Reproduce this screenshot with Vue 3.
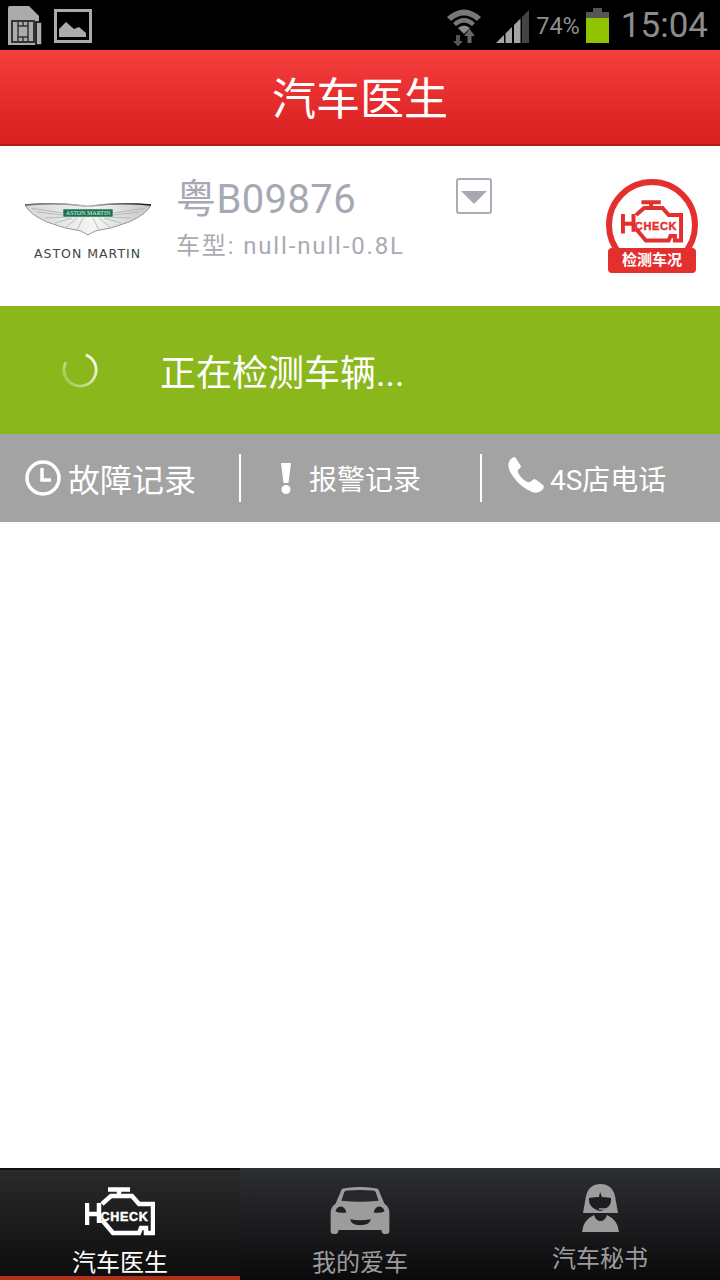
<template>
  <div class="app">
    <div class="status">
      <div class="status__left">
        <svg class="ic-sim" viewBox="0 0 36 40">
          <path d="M0 2Q0 0 2 0H21L31 10V39H0Z" fill="#a9aca8" />
          <rect x="28" y="16" width="6" height="23" fill="#a9aca8" stroke="#000" stroke-width="1.5" />
          <rect x="4" y="15" width="22" height="21" fill="none" stroke="#333" stroke-width="2" />
          <rect x="10" y="20" width="10" height="11" fill="none" stroke="#333" stroke-width="1.5" />
          <path d="M10 15v5M15 15v5M20 15v5M10 31v5M15 31v5M20 31v5" stroke="#333" stroke-width="1.5" />
        </svg>
        <svg class="ic-pic" viewBox="0 0 38 34">
          <rect x="1.5" y="1.5" width="35" height="31" fill="none" stroke="#a9aca8" stroke-width="3" />
          <path d="M5 28V20L12 13L20 20L25 18L32 24V28Z" fill="#a9aca8" />
        </svg>
      </div>
      <div class="status__right">
        <svg class="ic-wifi" viewBox="0 0 34 38">
          <path d="M0 9Q17 -6 34 9L30 13Q17 2 4 13Z" fill="#777" />
          <path d="M6 15Q17 5 28 15L25 18Q17 11 9 18Z" fill="#777" />
          <path d="M11 20Q17 15 23 20L17 26Z" fill="#8a8a8a" />
          <path d="M9 27H13V33H16L11 38.500L6 33H9Z" fill="#555" />
          <path d="M20.500 35V28H17L22.500 21L28 28H24.500V35Z" fill="#666" />
        </svg>
        <svg class="ic-signal" viewBox="0 0 33 33">
          <path d="M0 33L8 25V33Z M9.500 33V23.500L16 17V33Z M18 33V15L24.500 8.500V33Z" fill="#a5a5a5" />
          <path d="M26 33V7L33 0V33Z" fill="#444" />
        </svg>
        <span class="status__pct">74%</span>
        <div class="battery">
          <i class="battery__cap"></i>
          <i class="battery__empty"></i>
          <i class="battery__fill"></i>
        </div>
        <span class="status__time">15:04</span>
      </div>
    </div>

    <div class="title">汽车医生</div>

    <div class="car">
      <div class="car__logo">
        <svg class="wings" viewBox="0 0 126 34">
          <defs>
            <linearGradient id="wing" x1="0" y1="0" x2="1" y2="0">
              <stop offset="0" stop-color="#d4d6d5" />
              <stop offset="0.55" stop-color="#f4f5f5" />
              <stop offset="1" stop-color="#c4c6c6" />
            </linearGradient>
            <linearGradient id="edge" x1="0" y1="0" x2="1" y2="0">
              <stop offset="0" stop-color="#5a5e5e" />
              <stop offset="0.5" stop-color="#b9bcbc" />
              <stop offset="1" stop-color="#141414" />
            </linearGradient>
          </defs>
          <path d="M0 3Q30 0 60 4H66Q96 0 126 3Q122 12 104 20Q86 27 70 29L63 33L56 29Q40 27 22 20Q4 12 0 3Z" fill="url(#wing)" stroke="#7d8181" stroke-width="0.8" />
          <path d="M0 3Q30 0 60 4M66 4Q96 0 126 3" fill="none" stroke="url(#edge)" stroke-width="1.6" />
          <path d="M7 6.500L38 11M12 10L38 13M20 16L42 15M30 21L47 16M41 25L52 16M52 28L58 16M74 28L68 16M85 25L74 16M96 21L79 16M106 16L84 15M114 10L88 13M119 6.500L88 11" stroke="#a4a8a8" stroke-width="0.7" fill="none" />
          <rect x="38" y="7" width="50" height="8" fill="#16734f" stroke="#dfe2e1" stroke-width="0.6" />
          <text x="63" y="13" class="wings__label" text-anchor="middle">ASTON MARTIN</text>
        </svg>
        <span class="car__brand">ASTON MARTIN</span>
      </div>
      <div class="car__info">
        <div class="car__plate">粤B09876</div>
        <div class="car__model">车型: null-null-0.8L</div>
      </div>
      <div class="car__arrow"><i></i></div>
      <div class="check">
        <div class="check__ring">
          <svg class="check__engine" viewBox="0 0 70 50">
            <path d="M23 2.500H45M34 2.500V9M2 16V38M2 27H14M14 16V36M17 17L26 9H47L54 17H68V46H61V41H56L54 46H28L17 33" fill="none" stroke="#e42f2f" stroke-width="4.500" />
            <text x="39.500" y="34" class="check__word" text-anchor="middle">CHECK</text>
          </svg>
        </div>
        <div class="check__tag">检测车况</div>
      </div>
    </div>

    <div class="progress">
      <svg class="spinner" viewBox="0 0 38 38">
        <defs>
          <linearGradient id="spin" x1="1" y1="0" x2="0" y2="0.8">
            <stop offset="0" stop-color="#fff" />
            <stop offset="1" stop-color="#fff" stop-opacity="0.25" />
          </linearGradient>
        </defs>
        <path d="M25 3A17 17 0 1 1 4 11" fill="none" stroke="url(#spin)" stroke-width="3" />
      </svg>
      <span class="progress__text">正在检测车辆...</span>
    </div>

    <div class="actions">
      <div class="action action--record">
        <svg class="action__clock" viewBox="0 0 36 36">
          <circle cx="18" cy="18" r="16" fill="none" stroke="#fff" stroke-width="3.500" />
          <path d="M17 8V20H26" fill="none" stroke="#fff" stroke-width="3.500" />
        </svg>
        <span class="action__big">故障记录</span>
      </div>
      <div class="action action--alarm">
        <svg class="action__bang" viewBox="0 0 12 32">
          <path d="M1 1H11L8.500 21H3.500Z" fill="#fff" />
          <circle cx="6" cy="27.500" r="4.500" fill="#fff" />
        </svg>
        <span>报警记录</span>
      </div>
      <div class="action action--phone">
        <svg class="action__phone" viewBox="0 0 36 36">
          <path d="M7 0L13 9Q13 11 10 13Q9 15 13 20Q18 26 22 25L26 22Q28 22 36 29Q36 32 33 34Q29 37 24 35Q12 30 4 18Q-2 9 2 3Q4 0 7 0Z" fill="#fff" />
        </svg>
        <span>4S店电话</span>
      </div>
    </div>

    <div class="spacer"></div>

    <div class="tabs">
      <div class="tab tab--active">
        <svg class="tab__engine" viewBox="0 0 70 50">
          <path d="M23 2.500H45M34 2.500V9M2 16V38M2 27H14M14 16V36M17 17L26 9H47L54 17H68V46H61V41H56L54 46H28L17 33" fill="none" stroke="#fff" stroke-width="4.500" />
          <text x="39.500" y="34" class="tab__word" text-anchor="middle">CHECK</text>
        </svg>
        <span class="tab__label">汽车医生</span>
      </div>
      <div class="tab">
        <svg class="tab__car" viewBox="0 0 60 48">
          <path d="M11 3Q12 1 16 1Q30 -1 44 1Q48 1 49 3L55 17Q60 20 60 26V45Q60 48 57 48H55Q52 48 52 44H8Q8 48 5 48H3Q0 48 0 45V26Q0 20 5 17Z" fill="#9c9c9c" />
          <path d="M11 14L14 5Q15 3.500 18 3.500Q30 2.500 42 3.500Q45 3.500 46 5L49 14Q30 16 11 14Z" fill="#26272a" />
          <path d="M5 25Q6 20 11 20Q15 21 16 26Q10 27 5 25ZM55 25Q54 20 49 20Q45 21 44 26Q50 27 55 25ZM20 33Q30 35 41 33Q40 39 30 39Q21 39 20 33Z" fill="#1f2023" />
        </svg>
        <span class="tab__label">我的爱车</span>
      </div>
      <div class="tab tab--third">
        <svg class="tab__agent" viewBox="0 0 37 48">
          <path d="M18.500 0Q30 0 33 12L36 29H1L4 12Q7 0 18.500 0Z" fill="#9c9c9c" />
          <path d="M7 14Q18 12 29 14Q30 24 18 27Q6 24 7 14Z" fill="#1c1d20" />
          <path d="M18 8L20 13H17Z" fill="#1c1d20" />
          <path d="M17 25H24Q28 24 29 21" fill="none" stroke="#9c9c9c" stroke-width="1.500" />
          <path d="M0 48Q1 36 12 31Q14 37 18.500 37Q23 37 25 31Q36 36 37 48Z" fill="#9c9c9c" />
        </svg>
        <span class="tab__label">汽车秘书</span>
      </div>
    </div>
  </div>
</template>

<script setup>
</script>

<style scoped>
.app {
  width: 720px;
  height: 1280px;
  display: flex;
  flex-direction: column;
  background: #fff;
  overflow: hidden;
  font-family: Roboto, "Noto Sans CJK SC", sans-serif;
}

.status {
  height: 50px;
  flex-shrink: 0;
  background: #000;
  display: flex;
  align-items: center;
  justify-content: space-between;
  padding: 0 12px 0 8px;
}
.status__left { display: flex; align-items: flex-start; gap: 10px; }
.ic-sim { width: 36px; height: 40px; margin-top: 1px; }
.ic-pic { width: 38px; height: 34px; margin-top: 4px; }
.status__right { display: flex; align-items: center; }
.ic-wifi { width: 34px; height: 38px; margin: 4px 15px 0 0; }
.ic-signal { width: 33px; height: 33px; margin: 3px 7px 0 0; }
.status__pct { font-size: 23.500px; color: #8f8f8f; margin: 2px 6px 0 0; }
.battery { width: 23px; height: 35px; display: flex; flex-direction: column; align-items: center; margin: 1px 12px 0 0; }
.battery__cap { width: 9px; height: 4px; background: #555; }
.battery__empty { width: 23px; height: 6px; background: #555; }
.battery__fill { width: 23px; height: 25px; background: #91c400; }
.status__time { font-size: 35px; color: #8c8c8c; }

.title {
  height: 96px;
  flex-shrink: 0;
  box-sizing: border-box;
  background: linear-gradient(#f43d3d, #d91f1f);
  border-bottom: 2px solid #b81a1a;
  color: #fff;
  font-size: 44px;
  line-height: 100px;
  text-align: center;
}

.car {
  height: 160px;
  flex-shrink: 0;
  display: flex;
  align-items: flex-start;
}
.car__logo { width: 177px; display: flex; flex-direction: column; align-items: flex-start; padding-top: 56px; box-sizing: border-box; height: 160px; }
.wings { width: 126px; height: 34px; margin-left: 25px; }
.wings__label { font-size: 6px; fill: #e8f0ea; font-family: "Liberation Serif", serif; }
.car__brand { font-family: "DejaVu Sans", sans-serif; font-size: 12.500px; letter-spacing: 1px; color: #444; margin: 10px 0 0 34px; white-space: nowrap; }
.car__info { width: 279px; padding-top: 29px; }
.car__plate { font-size: 40px; line-height: 50px; letter-spacing: 0.400px; color: #a6a9b3; margin-left: -1px; }
.car__model { font-size: 24px; line-height: 34px; letter-spacing: 1.850px; color: #a9abb2; margin: 4px 0 0 -1px; white-space: nowrap; }
.car__arrow {
  width: 36px;
  height: 36px;
  box-sizing: border-box;
  margin-top: 32px;
  border: 2px solid #a9acb6;
  border-radius: 3px;
  display: flex;
  justify-content: center;
  padding-top: 11px;
}
.car__arrow i { width: 0; height: 0; border-style: solid; border-width: 13px 13px 0; border-color: #a6a9b3 transparent transparent; }
.check { width: 92px; height: 94px; margin: 33px 0 0 114px; position: relative; flex-shrink: 0; }
.check__ring {
  width: 92px;
  height: 92px;
  box-sizing: border-box;
  border: 6px solid #e42f2f;
  border-radius: 50%;
  display: flex;
  justify-content: center;
  padding-top: 15px;
}
.check__engine { width: 62px; height: 44px; }
.check__word { font: 900 12.500px "Liberation Sans", sans-serif; fill: #e42f2f; stroke: #e42f2f; stroke-width: 0.500px; letter-spacing: 0.700px; }
.check__tag {
  position: absolute;
  left: 2px;
  bottom: 0;
  width: 88px;
  height: 25px;
  border-radius: 4px;
  background: #e42f2f;
  color: #fff;
  font-size: 15px;
  font-weight: 700;
  line-height: 25px;
  text-align: center;
}

.progress {
  height: 128px;
  flex-shrink: 0;
  background: #8ab71b;
  display: flex;
  align-items: center;
  padding-left: 62px;
}
.spinner { width: 36px; height: 36px; margin: -1px 62px 0 0; }
.progress__text { color: #fff; font-size: 36px; }

.actions {
  height: 88px;
  flex-shrink: 0;
  background: #a3a3a3;
  display: flex;
  align-items: center;
  color: #fff;
  font-size: 28px;
}
.action { height: 48px; display: flex; align-items: center; box-sizing: border-box; }
.action--record { width: 241px; padding-left: 25px; border-right: 2px solid #fff; }
.action--alarm { width: 241px; padding-left: 39px; border-right: 2px solid #fff; }
.action--phone { flex: 1; padding-left: 26px; }
.action__clock { width: 36px; height: 36px; margin-right: 7px; }
.action__big { font-size: 32px; }
.action__bang { width: 12px; height: 32px; margin-right: 17px; }
.action__phone { width: 36px; height: 36px; margin: -6px 6px 0 0; }

.spacer { flex: 1; }

.tabs {
  height: 112px;
  flex-shrink: 0;
  display: flex;
  background: linear-gradient(#2d2e32, #0a0a0b);
}
.tab {
  flex: 1;
  display: flex;
  flex-direction: column;
  align-items: center;
  position: relative;
  padding-top: 19px;
  color: #9c9c9c;
  box-sizing: border-box;
}
.tab--active {
  background: linear-gradient(#2b2a2a, #0d0c0c);
  border-top: 2px solid #111;
  padding-top: 17px;
  color: #fff;
}
.tab--active::after {
  content: "";
  position: absolute;
  left: 0;
  right: 0;
  bottom: 0;
  height: 4px;
  background: #ac3116;
}
.tab__engine { width: 70px; height: 50px; }
.tab__word { font: 900 12.500px "Liberation Sans", sans-serif; fill: #fff; stroke: #fff; stroke-width: 0.500px; letter-spacing: 0.700px; }
.tab__car { width: 60px; height: 48px; }
.tab__agent { width: 37px; height: 48px; margin-top: -3px; }
.tab__label { font-size: 24px; line-height: 34px; margin-top: 12px; }
.tab--active .tab__label { margin-top: 9px; }
.tab--third .tab__label { margin-top: 10px; }
</style>
